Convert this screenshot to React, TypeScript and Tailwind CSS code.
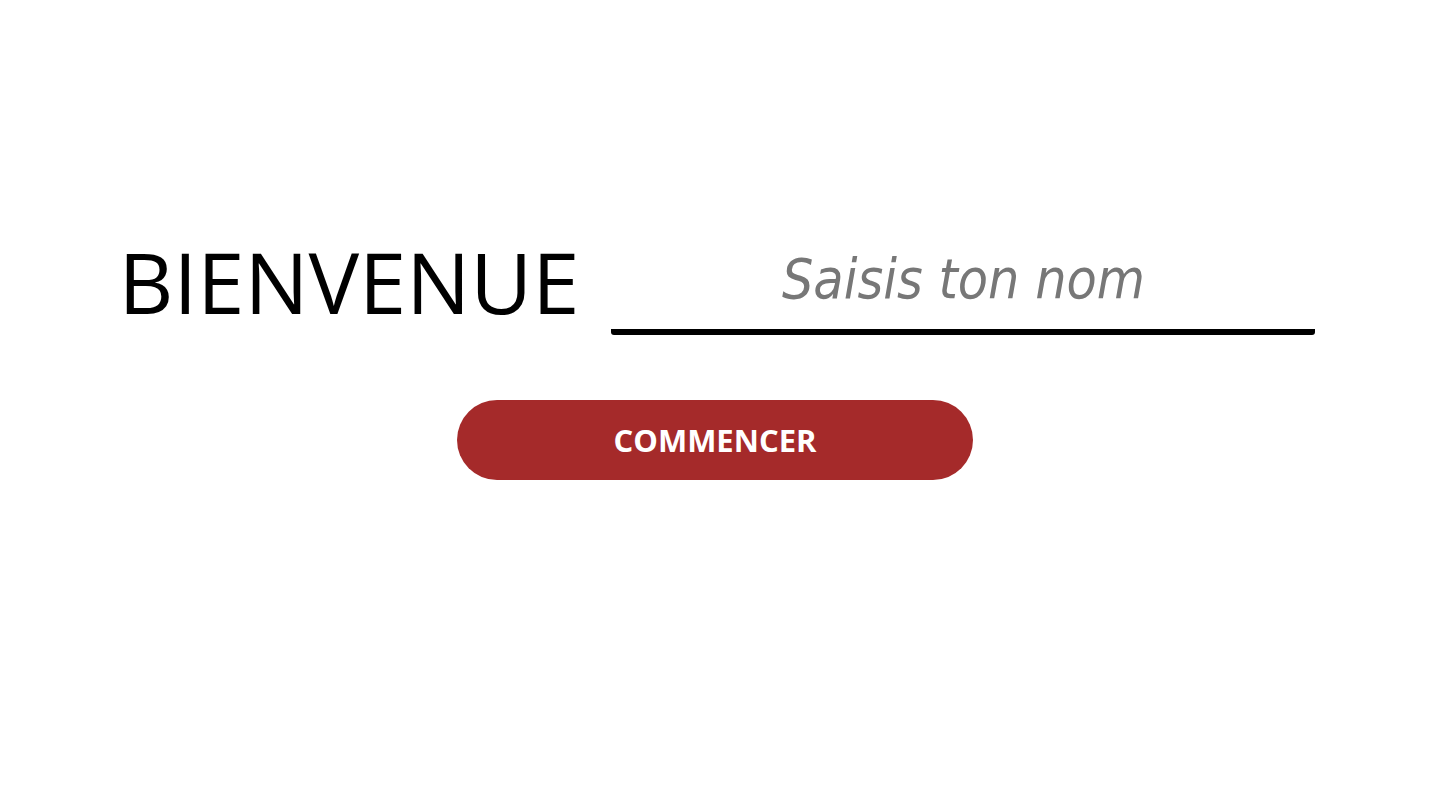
import React from "react";

export default function App() {
  return (
    <div className="w-[1440px] h-[810px] bg-white flex flex-col items-center pt-[239px]">
      <div className="flex items-end gap-[32px] pr-[6px]">
        <h1 className="text-[85px] leading-none text-black font-normal font-['Open_Sans','Noto_Sans',sans-serif] pb-[11px]">
          BIENVENUE
        </h1>
        <input
          type="text"
          placeholder="Saisis ton nom"
          className="w-[704px] h-[96px] border-b-[6px] border-black rounded-[3px] text-center text-[55px] italic outline-none placeholder:text-[#777777] pb-[11px] font-['DejaVu_Sans_Condensed','DejaVu_Sans',sans-serif]"
        />
      </div>
      <button className="mt-[65px] w-[516px] h-[80px] rounded-full bg-[#a52a2a] text-white text-[31px] font-bold font-['Open_Sans','Noto_Sans',sans-serif] mr-[10px]">
        COMMENCER
      </button>
    </div>
  );
}
